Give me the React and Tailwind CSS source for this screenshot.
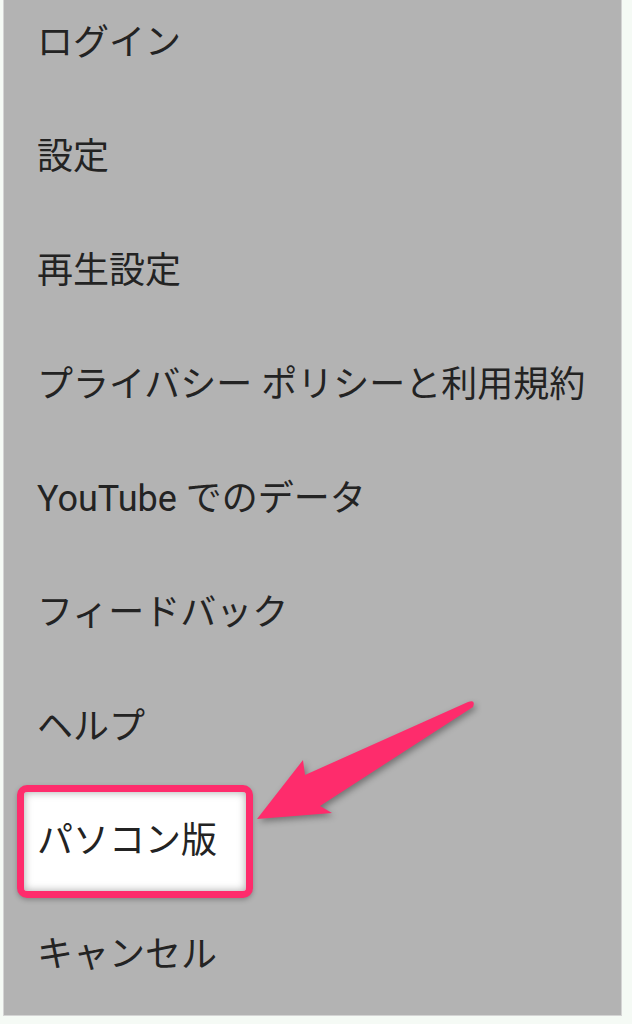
export default function App() {
  const items = [
    'ログイン',
    '設定',
    '再生設定',
    'プライバシー ポリシーと利用規約',
    'YouTube でのデータ',
    'フィードバック',
    'ヘルプ',
    'パソコン版',
    'キャンセル',
  ];

  return (
    <div className="relative w-[632px] h-[1024px] overflow-hidden bg-[#f5faf5] pl-[3px]">
      <div className="relative w-[619px] h-[1016px] overflow-hidden bg-[#b3b3b3] border-x border-b border-[#d4d4d4]">
        {/* highlight behind "パソコン版" */}
        <div className="absolute left-[13px] top-[785px] w-[236px] h-[113px] rounded-[10px] border-[7px] border-[#fe2c6c] bg-white shadow-[inset_0_0_9px_rgba(0,0,0,0.35),0_2px_5px_rgba(0,0,0,0.25)]" />

        <ul className="relative -mt-[14px] font-['Roboto','Noto_Sans_CJK_JP',sans-serif] text-[36px] text-[#232323]">
          {items.map(label => (
            <li key={label} className="h-[114px] flex items-center pl-[33px] leading-none whitespace-nowrap">
              {label}
            </li>
          ))}
        </ul>
      </div>

      <svg
        className="absolute left-0 top-0 pointer-events-none"
        width="632"
        height="1024"
        viewBox="0 0 632 1024"
        style={{ filter: 'drop-shadow(2px 3px 3px rgba(0,0,0,0.35))' }}
      >
        <path
          d="M257 819 L303 760 L305 775 L468 702 Q476 699 473 707 L320 806 L332 813 Z"
          fill="#fe2c6c"
        />
      </svg>
    </div>
  );
}
